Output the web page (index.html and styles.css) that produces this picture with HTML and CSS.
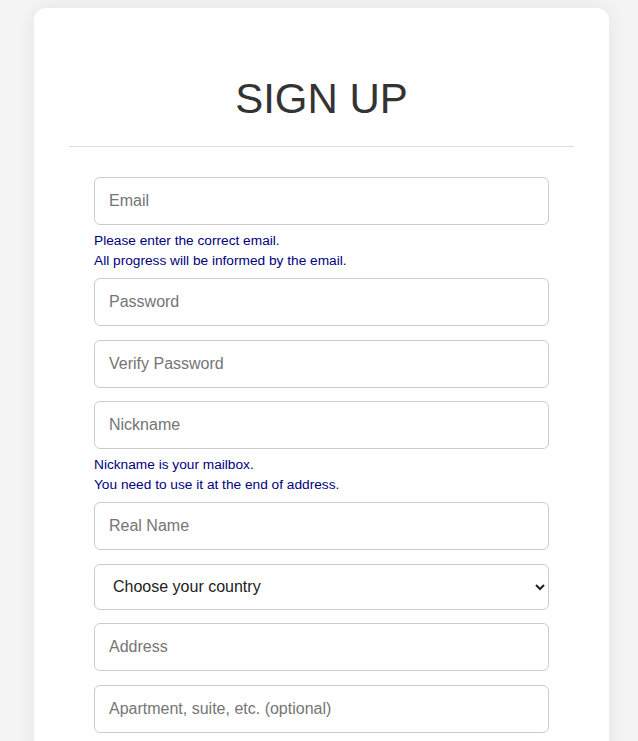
FILE: index.html
```html
<!DOCTYPE html>
<html lang="en">
<head>
    <meta charset="UTF-8">
    <meta name="viewport" content="width=device-width, initial-scale=1.0">
    <title>Sign Up</title>
    <link rel="stylesheet" href="styles.css">
</head>
<body>

    <div class="container">
        <h1>SIGN UP</h1>

        <form class="signup-form">
            <input type="email" name="email" placeholder="Email">
            <p class="hint">Please enter the correct email.<br>All progress will be informed by the email.</p>

            <input type="password" name="password" placeholder="Password">
            <input type="password" name="verify" placeholder="Verify Password">

            <input type="text" name="nickname" placeholder="Nickname">
            <p class="hint">Nickname is your mailbox.<br>You need to use it at the end of address.</p>

            <input type="text" name="realname" placeholder="Real Name">

            <select name="country">
                <option value="">Choose your country</option>
                <option value="us">United States</option>
                <option value="uk">United Kingdom</option>
                <option value="ca">Canada</option>
            </select>

            <input type="text" name="address" placeholder="Address">
            <input type="text" name="address2" placeholder="Apartment, suite, etc. (optional)">
            <input type="text" name="city" placeholder="City">
            <input type="text" name="zip" placeholder="Postal Code">
            <input type="text" name="phone" placeholder="Phone">

            <button type="submit">Sign Up</button>
        </form>
    </div>

</body>
</html>
```

FILE: styles.css
```css
body {
    font-family: "Liberation Sans", Arial, sans-serif;
    background-color: #f4f4f4;
    margin: 0;
    padding: 8px 0 40px 34px;
}
.container {
    width: 575px;
    padding: 67px 35px 40px;
    box-sizing: border-box;
    background-color: #fff;
    border-radius: 12px;
    box-shadow: 0 0 20px rgba(0, 0, 0, 0.07);
}
h1 {
    margin: 0;
    padding-bottom: 23px;
    border-bottom: 1px solid #ddd;
    text-align: center;
    font-size: 42px;
    font-weight: normal;
    color: #333;
}
.signup-form {
    padding: 30px 25px 0;
}
.signup-form input,
.signup-form select {
    display: block;
    width: 100%;
    height: 48px;
    margin-bottom: 13.5px;
    padding: 0 14px;
    border: 1px solid #ccc;
    border-radius: 6px;
    box-sizing: border-box;
    font-family: "Liberation Sans", Arial, sans-serif;
    font-size: 16px;
    color: #222;
    background-color: #fff;
}
.signup-form input::placeholder {
    color: #757575;
}
.signup-form select {
    height: 46px;
    padding: 0 4px 0 14px;
}
.hint {
    margin: -7.5px 0 7px;
    font-size: 13.7px;
    line-height: 20px;
    color: #000080;
}
button {
    width: 100%;
    padding: 12px;
    background-color: #333;
    color: #fff;
    border: none;
    border-radius: 6px;
    font-size: 16px;
    cursor: pointer;
}
```
